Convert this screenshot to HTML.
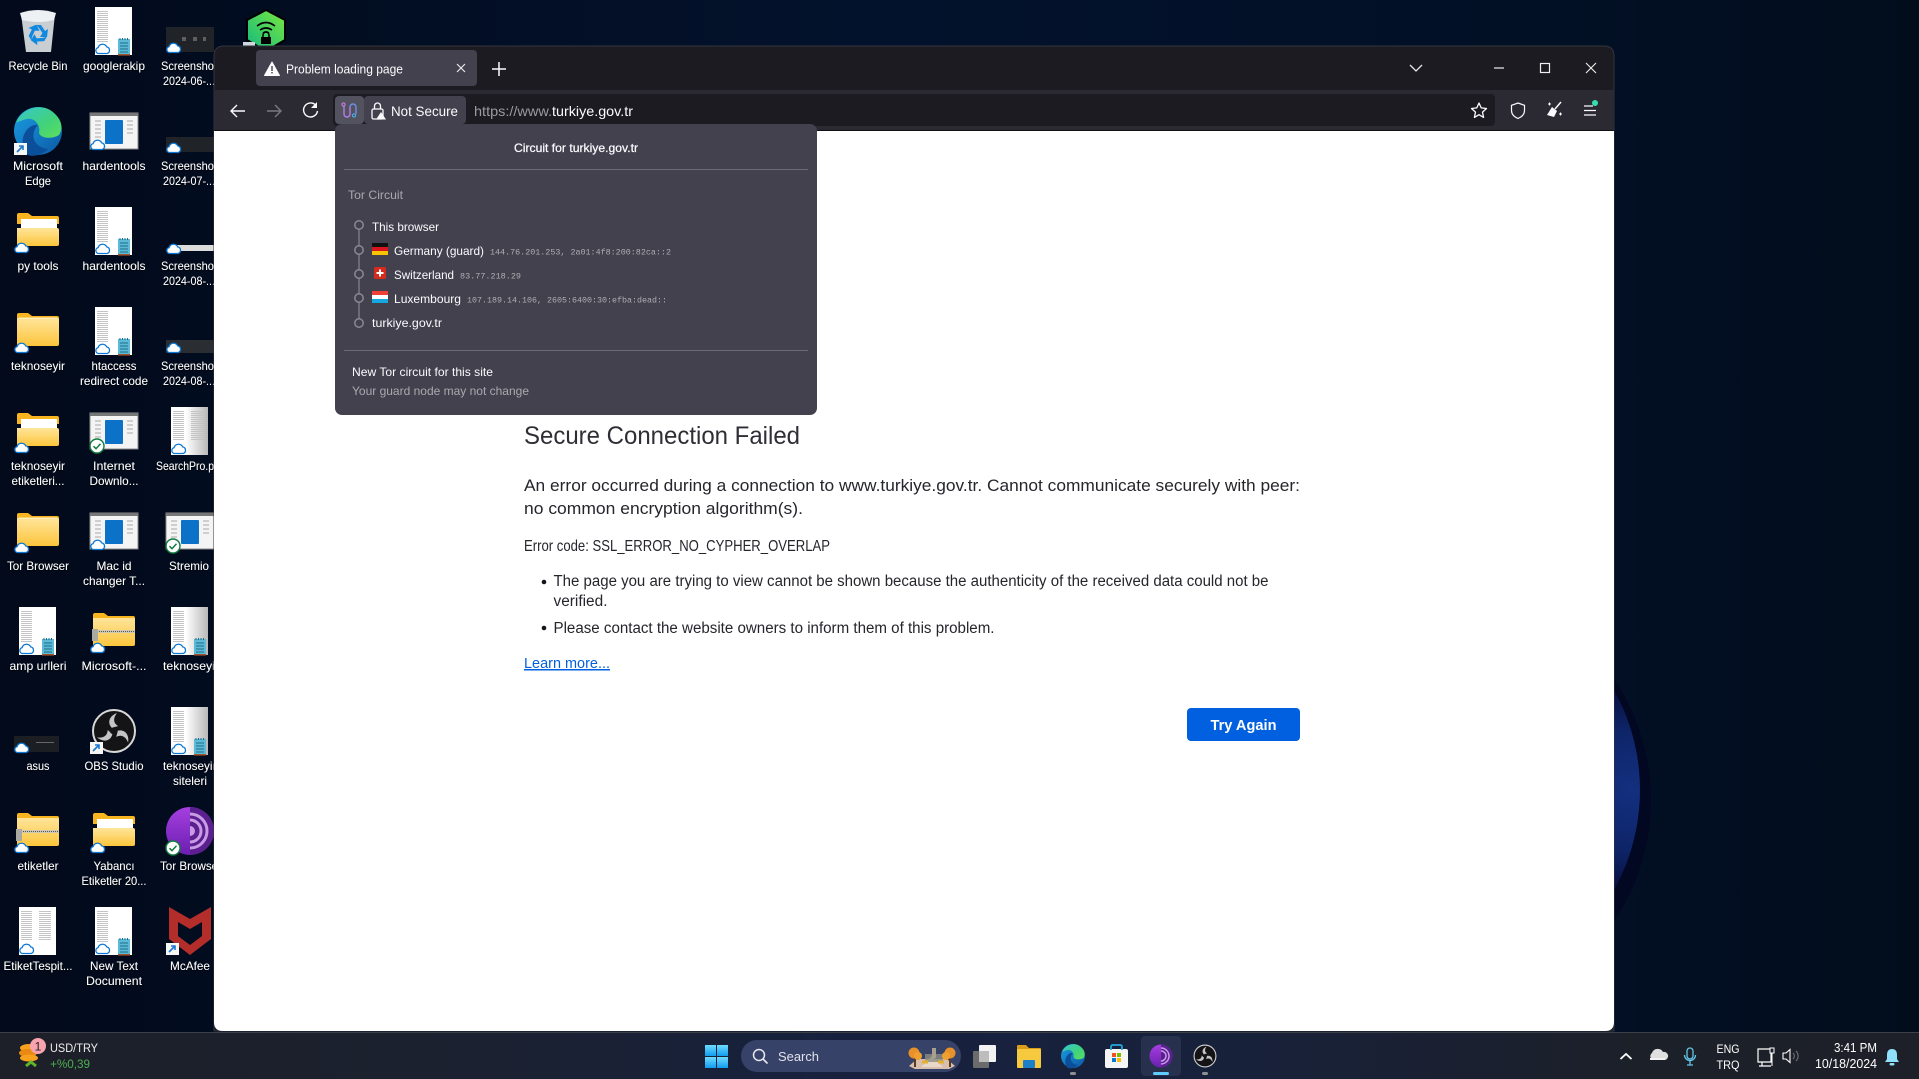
<!DOCTYPE html>
<html><head><meta charset="utf-8"><title>Problem loading page</title>
<style>
html,body{margin:0;padding:0;width:1919px;height:1079px;overflow:hidden;background:#020c1e}
svg{display:block;position:absolute;left:0;top:0}
text{font-family:"Liberation Sans",sans-serif}
.l{font-size:12px;fill:#fff;text-anchor:middle}
.m{font-family:"Liberation Mono",monospace;font-size:8.5px;fill:#aeaeb5}
.p{font-size:16px;fill:#26252c}
</style></head><body>
<svg width="1919" height="1079" viewBox="0 0 1919 1079" xmlns="http://www.w3.org/2000/svg">
<defs>
<linearGradient id="bg" x1="0" y1="0" x2="1" y2="0"><stop offset="0" stop-color="#020a1b"/><stop offset=".45" stop-color="#03122c"/><stop offset=".8" stop-color="#021026"/><stop offset="1" stop-color="#020d1c"/></linearGradient>
<radialGradient id="sph" gradientUnits="userSpaceOnUse" cx="1630" cy="790" r="100"><stop offset="0" stop-color="#13307f"/><stop offset=".6" stop-color="#0e2468"/><stop offset="1" stop-color="#061040"/></radialGradient>
<linearGradient id="tb" x1="0" y1="0" x2="1" y2="0"><stop offset="0" stop-color="#1d2028"/><stop offset=".25" stop-color="#1b2130"/><stop offset=".45" stop-color="#17213f"/><stop offset=".65" stop-color="#18213a"/><stop offset=".85" stop-color="#1c2029"/><stop offset="1" stop-color="#1d2028"/></linearGradient>
<linearGradient id="fold" x1="0" y1="0" x2="0" y2="1"><stop offset="0" stop-color="#ffe59a"/><stop offset="1" stop-color="#fcc53c"/></linearGradient>
<linearGradient id="edge" x1="0" y1="0" x2="1" y2="1"><stop offset="0" stop-color="#37c6d0"/><stop offset=".6" stop-color="#41d27a"/><stop offset="1" stop-color="#5fe05c"/></linearGradient>
<linearGradient id="edge2" x1="0" y1="0" x2="1" y2="1"><stop offset="0" stop-color="#1b9de2"/><stop offset="1" stop-color="#0c59a4"/></linearGradient>
<linearGradient id="tor" x1="0" y1="0" x2="0" y2="1"><stop offset="0" stop-color="#a63fe0"/><stop offset="1" stop-color="#6a1fb0"/></linearGradient>
<linearGradient id="win" x1="0" y1="0" x2="0" y2="1"><stop offset="0" stop-color="#6fdcff"/><stop offset="1" stop-color="#0f9cf0"/></linearGradient>
<linearGradient id="vpn" x1="0" y1="1" x2="1" y2="0"><stop offset="0" stop-color="#10b981"/><stop offset="1" stop-color="#7be83d"/></linearGradient>
<linearGradient id="fade" x1="0" y1="0" x2="1" y2="0"><stop offset=".4" stop-color="#fff"/><stop offset="1" stop-color="#b8b8b8"/></linearGradient>
<pattern id="txt" width="20" height="2" patternUnits="userSpaceOnUse"><rect width="13" height="1" fill="#c4c4c4"/></pattern>
<filter id="sh" x="-10%" y="-10%" width="120%" height="120%"><feDropShadow dx="0" dy="1" stdDeviation=".8" flood-color="#000" flood-opacity=".9"/></filter>

<g id="cloud"><path d="M3.6 10.5a3 3 0 0 1-.5-5.9 4.6 4.6 0 0 1 8.6-.7 3.400 3.400 0 0 1 .4 6.600z" fill="#fff" stroke="#0a78d4" stroke-width="1.300"/></g>
<g id="note"><rect x="0" y="1" width="12" height="16" fill="#5dbad6"/><path d="M2 5h8M2 8h8M2 11h8M2 14h8" stroke="#1c6f8a" stroke-width="1"/><rect y="16" width="12" height="1.600" fill="#a0522d"/><path d="M2 0v2M4.500 0v2M7 0v2M9.500 0v2" stroke="#1c6f8a"/></g>
<g id="doc"><rect width="37" height="48" fill="#fff"/><rect x="2" y="3" width="13" height="32" fill="url(#txt)"/><use href="#cloud" x="0" y="36"/><use href="#note" x="23" y="31"/></g>
<g id="docN"><rect width="37" height="48" fill="#fff"/><rect x="2" y="3" width="30" height="30" fill="url(#txt)"/><use href="#cloud" x="0" y="36"/></g>
<g id="docF"><rect width="37" height="48" fill="url(#fade)"/><rect x="2" y="3" width="13" height="32" fill="url(#txt)"/><use href="#cloud" x="0" y="36"/><use href="#note" x="23" y="31"/></g>
<g id="docW"><rect width="37" height="48" fill="url(#fade)"/><rect x="2" y="3" width="30" height="30" fill="url(#txt)"/><use href="#cloud" x="0" y="36"/></g>
<g id="fld"><path d="M0 2q0-2 2-2h9l4 3h25q2 0 2 2v6H0z" fill="#f8b520"/><path d="M0 5h40q2 0 2 2v24q0 2-2 2H2q-2 0-2-2z" fill="url(#fold)"/><path d="M2 5h38" stroke="#fff" stroke-width="1" opacity=".7"/><use href="#cloud" x="-3" y="29"/></g>
<g id="fldW"><path d="M0 2q0-2 2-2h9l4 3h25q2 0 2 2v6H0z" fill="#f8b520"/><rect x="4" y="6" width="36" height="12" fill="#fff"/><path d="M0 15h40q2 0 2 2v14q0 2-2 2H2q-2 0-2-2z" fill="url(#fold)"/><use href="#cloud" x="-3" y="29"/></g>
<g id="zip"><path d="M0 2q0-2 2-2h9l4 3h25q2 0 2 2v6H0z" fill="#f8b520"/><path d="M0 5h40q2 0 2 2v24q0 2-2 2H2q-2 0-2-2z" fill="url(#fold)"/><rect y="17" width="42" height="3" fill="#cfc9b4"/><path d="M2 18.500h40" stroke="#555" stroke-dasharray="1 1"/><rect x="-1" y="16" width="6" height="12" fill="#a9a9a2"/><use href="#cloud" x="-3" y="29"/></g>
<g id="app"><rect width="48" height="36" fill="#f4f4f4" stroke="#8a8a8a"/><rect width="48" height="3" fill="#777"/><rect x="15" y="7" width="18" height="24" rx="1" fill="#0b72c8"/><path d="M5 8h6M5 12h6M5 16h6M5 20h6M5 24h6M37 8h6M37 12h6M37 16h6M37 20h6" stroke="#aaa"/></g>
<g id="chk"><circle cx="7" cy="7" r="7" fill="#fff" stroke="#0f7b3e" stroke-width="1.400"/><path d="M3.500 7.200l2.500 2.500 4.500-5" fill="none" stroke="#0f7b3e" stroke-width="1.500"/></g>
<g id="short"><rect width="13" height="12" fill="#f6f6f6"/><path d="M3 9l6-6M5 3h4v4" stroke="#1e78d2" stroke-width="1.600" fill="none"/></g>
<path id="blade" d="M-2-3C-7-8-5-15 3-18-1-13-1-8 4-5 2-4-1-4-2-3z" fill="#c4c4c4"/>
<g id="obsi"><circle r="21" fill="#141416" stroke="#d8d8d8" stroke-width="2"/><use href="#blade"/><use href="#blade" transform="rotate(120)"/><use href="#blade" transform="rotate(240)"/></g>
<g id="arr"><path d="M-2-9L3-9 7-3 10-5 9 3 2 3 4.500-1 1-6z" fill="#0f88e0"/></g>
</defs>

<!-- wallpaper -->
<rect width="1919" height="1079" fill="url(#bg)"/>
<circle cx="1435" cy="800" r="216" fill="#020722"/>
<circle cx="1435" cy="790" r="205" fill="url(#sph)"/>

<!-- desktop icons -->
<g id="icons">
<!-- recycle -->
<g transform="translate(20,9)"><path d="M1 5h34l-4 38H6z" fill="#c9ced2"/><path d="M0 4q18-6 36 0l-2 7q-16 4-32 0z" fill="#eef1f3"/><g transform="translate(18,25)"><use href="#arr"/><use href="#arr" transform="rotate(120)"/><use href="#arr" transform="rotate(240)"/></g></g>
<use href="#doc" x="95" y="7"/>
<g><rect x="166" y="27" width="48" height="25" fill="#202327"/><rect x="182" y="37" width="4" height="4" fill="#5f5f5f"/><rect x="193" y="37" width="4" height="4" fill="#5f5f5f"/><rect x="203" y="37" width="3" height="4" fill="#5f5f5f"/><use href="#cloud" x="166" y="42"/></g>
<!-- edge -->
<g transform="translate(38,131)"><circle r="24" fill="url(#edge2)"/><path d="M-22-8C-16-24 6-30 18-16c6 6 7 14 3 20-6 4-18 4-20-2 2-8-5-16-12-14-5 1-9 3-12 4z" fill="url(#edge)"/><path d="M-10 24C-22 12-12-8 0-6-8 2-6 16 10 18c-6 6-14 8-20 6z" fill="#0b4f9a"/></g>
<use href="#short" x="14" y="143"/>
<g transform="translate(90,113)"><use href="#app"/><use href="#cloud" x="0" y="26"/></g>
<g><rect x="166" y="137" width="48" height="15" fill="#202327"/><use href="#cloud" x="166" y="142"/></g>
<g transform="translate(17,213)"><use href="#fldW"/></g>
<use href="#doc" x="95" y="207"/>
<g><rect x="176" y="245" width="38" height="6" fill="#dcdcdc"/><use href="#cloud" x="166" y="243"/></g>
<g transform="translate(17,313)"><use href="#fld"/></g>
<use href="#doc" x="95" y="307"/>
<g><rect x="166" y="340" width="48" height="13" fill="#2a2d31"/><use href="#cloud" x="166" y="342"/></g>
<g transform="translate(17,413)"><use href="#fldW"/></g>
<g transform="translate(90,413)"><use href="#app"/><use href="#chk" y="26"/></g>
<use href="#docW" x="171" y="407"/>
<g transform="translate(17,513)"><use href="#fld"/></g>
<g transform="translate(90,513)"><use href="#app"/><use href="#cloud" x="0" y="26"/></g>
<g transform="translate(166,513)"><use href="#app"/><use href="#chk" y="26"/></g>
<use href="#doc" x="19" y="607"/>
<g transform="translate(93,613)"><use href="#zip"/></g>
<use href="#docF" x="171" y="607"/>
<g><rect x="14" y="736" width="45" height="16" fill="#1b1e23"/><rect x="36" y="742" width="18" height="1" fill="#666"/><use href="#cloud" x="14" y="742"/></g>
<use href="#obsi" x="114" y="731"/>
<use href="#short" x="90" y="742"/>
<use href="#docF" x="171" y="707"/>
<g transform="translate(17,813)"><use href="#zip"/></g>
<g transform="translate(93,813)"><use href="#fldW"/></g>
<g transform="translate(190,831)"><circle r="24" fill="url(#tor)"/><path d="M0-24a24 24 0 0 1 0 48z" fill="#5b1f90"/><path d="M0-17a17 17 0 0 1 0 34M0-11a11 11 0 0 1 0 22" fill="none" stroke="#c79be6" stroke-width="3"/><path d="M0-5a5 5 0 0 1 0 10z" fill="#c79be6"/></g>
<use href="#chk" x="166" y="841"/>
<use href="#docN" x="19" y="907"/>
<use href="#doc" x="95" y="907"/>
<path d="M169 907l21 12 21-12v32l-21 16-21-16z" fill="#b32e2b"/><path d="M178 922l12 7 12-7v14l-12 9-12-9z" fill="#020d20"/>
<use href="#short" x="166" y="943"/>

<g filter="url(#sh)">
<text class="l" x="38" y="70" textLength="59" lengthAdjust="spacingAndGlyphs">Recycle Bin</text>
<text class="l" x="38" y="170" textLength="50" lengthAdjust="spacingAndGlyphs">Microsoft</text>
<text class="l" x="38" y="185" textLength="26" lengthAdjust="spacingAndGlyphs">Edge</text>
<text class="l" x="38" y="270" textLength="41" lengthAdjust="spacingAndGlyphs">py tools</text>
<text class="l" x="38" y="370" textLength="54" lengthAdjust="spacingAndGlyphs">teknoseyir</text>
<text class="l" x="38" y="470" textLength="54" lengthAdjust="spacingAndGlyphs">teknoseyir</text>
<text class="l" x="38" y="485" textLength="53" lengthAdjust="spacingAndGlyphs">etiketleri...</text>
<text class="l" x="38" y="570" textLength="62" lengthAdjust="spacingAndGlyphs">Tor Browser</text>
<text class="l" x="38" y="670" textLength="57" lengthAdjust="spacingAndGlyphs">amp urlleri</text>
<text class="l" x="38" y="770" textLength="23" lengthAdjust="spacingAndGlyphs">asus</text>
<text class="l" x="38" y="870" textLength="41" lengthAdjust="spacingAndGlyphs">etiketler</text>
<text class="l" x="38" y="970" textLength="69" lengthAdjust="spacingAndGlyphs">EtiketTespit...</text>

<text class="l" x="114" y="70" textLength="62" lengthAdjust="spacingAndGlyphs">googlerakip</text>
<text class="l" x="114" y="170" textLength="63" lengthAdjust="spacingAndGlyphs">hardentools</text>
<text class="l" x="114" y="270" textLength="63" lengthAdjust="spacingAndGlyphs">hardentools</text>
<text class="l" x="114" y="370" textLength="45" lengthAdjust="spacingAndGlyphs">htaccess</text>
<text class="l" x="114" y="385" textLength="68" lengthAdjust="spacingAndGlyphs">redirect code</text>
<text class="l" x="114" y="470" textLength="42" lengthAdjust="spacingAndGlyphs">Internet</text>
<text class="l" x="114" y="485" textLength="49" lengthAdjust="spacingAndGlyphs">Downlo...</text>
<text class="l" x="114" y="570" textLength="35" lengthAdjust="spacingAndGlyphs">Mac id</text>
<text class="l" x="114" y="585" textLength="62" lengthAdjust="spacingAndGlyphs">changer T...</text>
<text class="l" x="114" y="670" textLength="65" lengthAdjust="spacingAndGlyphs">Microsoft-...</text>
<text class="l" x="114" y="770" textLength="59" lengthAdjust="spacingAndGlyphs">OBS Studio</text>
<text class="l" x="114" y="870" textLength="41" lengthAdjust="spacingAndGlyphs">Yabancı</text>
<text class="l" x="114" y="885" textLength="65" lengthAdjust="spacingAndGlyphs">Etiketler 20...</text>
<text class="l" x="114" y="970" textLength="48" lengthAdjust="spacingAndGlyphs">New Text</text>
<text class="l" x="114" y="985" textLength="56" lengthAdjust="spacingAndGlyphs">Document</text>

<text class="l" x="189" y="70" textLength="56" lengthAdjust="spacingAndGlyphs">Screenshot</text>
<text class="l" x="189" y="85" textLength="52" lengthAdjust="spacingAndGlyphs">2024-06-...</text>
<text class="l" x="189" y="170" textLength="56" lengthAdjust="spacingAndGlyphs">Screenshot</text>
<text class="l" x="189" y="185" textLength="52" lengthAdjust="spacingAndGlyphs">2024-07-...</text>
<text class="l" x="189" y="270" textLength="56" lengthAdjust="spacingAndGlyphs">Screenshot</text>
<text class="l" x="189" y="285" textLength="52" lengthAdjust="spacingAndGlyphs">2024-08-...</text>
<text class="l" x="189" y="370" textLength="56" lengthAdjust="spacingAndGlyphs">Screenshot</text>
<text class="l" x="189" y="385" textLength="52" lengthAdjust="spacingAndGlyphs">2024-08-...</text>
<text class="l" x="185" y="470" textLength="58" lengthAdjust="spacingAndGlyphs">SearchPro.p</text>
<text class="l" x="189" y="570" textLength="40" lengthAdjust="spacingAndGlyphs">Stremio</text>
<text class="l" x="191" y="670" textLength="56" lengthAdjust="spacingAndGlyphs">teknoseyir</text>
<text class="l" x="191" y="770" textLength="56" lengthAdjust="spacingAndGlyphs">teknoseyiri</text>
<text class="l" x="190" y="785" textLength="34" lengthAdjust="spacingAndGlyphs">siteleri</text>
<text class="l" x="191" y="870" textLength="62" lengthAdjust="spacingAndGlyphs">Tor Browser</text>
<text class="l" x="190" y="970" textLength="40" lengthAdjust="spacingAndGlyphs">McAfee</text>
</g>
</g>

<!-- vpn icon -->
<path d="M266 10l19 10v20l-19 11-19-11V20z" fill="url(#vpn)" stroke="#000" stroke-width="2"/>
<path d="M257 26q9-7 18 0M260 30q6-4 12 0M263 33q3-2 6 0" fill="none" stroke="#000" stroke-width="1.600"/>
<rect x="261" y="37" width="10" height="7" fill="#000"/><path d="M263 37v-2a3 3 0 0 1 6 0v2" fill="none" stroke="#000" stroke-width="1.500"/>
<rect x="243" y="42" width="12" height="6" fill="#cfd6de"/>

<!-- browser window -->
<path d="M214 56q0-10 10-10h1380q10 0 10 10v975H214z" fill="#1c1b22" stroke="#34343c" stroke-width="1"/>
<rect x="214" y="90" width="1400" height="40" fill="#2b2a33"/>
<rect x="214" y="130" width="1400" height="1" fill="#111"/>
<path d="M214 131h1400v891q0 9-9 9H223q-9 0-9-9z" fill="#fff"/>

<!-- tab -->
<rect x="256" y="50" width="221" height="36" rx="4" fill="#42414d"/>
<path d="M272 62l7.500 13.500h-15z" fill="#fbfbfe" stroke="#fbfbfe" stroke-width="1" stroke-linejoin="round"/><rect x="271.300" y="66" width="1.400" height="5" fill="#42414d"/><rect x="271.300" y="72" width="1.400" height="1.500" fill="#42414d"/>
<text x="286" y="73.500" font-size="13" fill="#fbfbfe" textLength="117" lengthAdjust="spacingAndGlyphs">Problem loading page</text>
<path d="M457 64l8 8M465 64l-8 8" stroke="#e8e8ea" stroke-width="1.200"/>
<path d="M499 62v14M492 69h14" stroke="#fbfbfe" stroke-width="1.500"/>
<!-- window ctrls -->
<path d="M1410 65l6 6 6-6" fill="none" stroke="#e6e6e8" stroke-width="1.300"/>
<path d="M1494 68h10" stroke="#f0f0f0" stroke-width="1.200"/>
<rect x="1540.500" y="63.500" width="9" height="9" fill="none" stroke="#f0f0f0" stroke-width="1.200"/>
<path d="M1586 63l10 10M1596 63l-10 10" stroke="#f0f0f0" stroke-width="1.100"/>

<!-- toolbar -->
<path d="M245 111h-14M237 105l-6 6 6 6" fill="none" stroke="#fbfbfe" stroke-width="1.400"/>
<path d="M267 111h14M275 105l6 6-6 6" fill="none" stroke="#7a7980" stroke-width="1.400"/>
<path d="M315.500 105a7 7 0 1 0 2 6" fill="none" stroke="#fbfbfe" stroke-width="1.400"/><path d="M317 102v6h-6z" fill="#fbfbfe"/>
<rect x="333" y="94" width="1162" height="32" rx="4" fill="#1c1b22"/>
<rect x="335" y="96" width="29" height="28" rx="4" fill="#53525f"/>
<rect x="364" y="96" width="102" height="28" rx="4" fill="#42414d"/>
<path d="M344 106v8a3 3 0 0 0 6 0v-7" fill="none" stroke="#b57ce8" stroke-width="1.400"/><path d="M350 107a3 3 0 0 1 6 0v7" fill="none" stroke="#6f8fe8" stroke-width="1.400"/>
<circle cx="343.500" cy="104.500" r="1.600" fill="none" stroke="#c77ee8" stroke-width="1.100"/><circle cx="354" cy="115.500" r="1.600" fill="none" stroke="#4ab0e8" stroke-width="1.100"/>
<rect x="372" y="109" width="11" height="10" rx="1.500" fill="none" stroke="#fbfbfe" stroke-width="1.300"/><path d="M374.500 109v-3a3 3 0 0 1 6 0v3" fill="none" stroke="#fbfbfe" stroke-width="1.300"/><path d="M381 112l5 7.500h-10z" fill="#fbfbfe"/>
<text x="391" y="116" font-size="14" fill="#fbfbfe" textLength="67" lengthAdjust="spacingAndGlyphs">Not Secure</text>
<text x="474" y="116" font-size="14" fill="#9a9aa0" textLength="78" lengthAdjust="spacingAndGlyphs">https://www.</text>
<text x="552" y="116" font-size="14" fill="#fbfbfe" textLength="81" lengthAdjust="spacingAndGlyphs">turkiye.gov.tr</text>
<path d="M1479 103l2.200 4.900 5.300.6-4 3.600 1.100 5.300-4.600-2.700-4.600 2.700 1.100-5.300-4-3.600 5.300-.6z" fill="none" stroke="#fbfbfe" stroke-width="1.300" stroke-linejoin="round"/>
<path d="M1518 103l6.500 2.300v5.200c0 4-3 6.500-6.500 8-3.500-1.500-6.500-4-6.500-8v-5.200z" fill="none" stroke="#fbfbfe" stroke-width="1.200"/>
<path d="M1561 102l-6 7" stroke="#fbfbfe" stroke-width="1.500"/><path d="M1552 107l5 4-3 6-7-2z" fill="#fbfbfe"/><path d="M1548 104h3M1549.500 102.500v3M1559 114h3M1560.500 112.500v3" stroke="#fbfbfe"/>
<path d="M1584 106h9M1584 110.500h12M1584 115h12" stroke="#fbfbfe" stroke-width="1.200"/><circle cx="1595" cy="103" r="3" fill="#35e0ac"/>

<!-- page -->
<text x="524" y="444" font-size="25" fill="#2f2e35" textLength="276" lengthAdjust="spacingAndGlyphs">Secure Connection Failed</text>
<text class="p" x="524" y="491" style="font-size:17px" textLength="776" lengthAdjust="spacingAndGlyphs">An error occurred during a connection to www.turkiye.gov.tr. Cannot communicate securely with peer:</text>
<text class="p" x="524" y="514" style="font-size:17px" textLength="279" lengthAdjust="spacingAndGlyphs">no common encryption algorithm(s).</text>
<text class="p" x="524" y="551" style="font-size:16px" textLength="306" lengthAdjust="spacingAndGlyphs">Error code: SSL_ERROR_NO_CYPHER_OVERLAP</text>
<circle cx="544" cy="582" r="2.300" fill="#15141a"/>
<text class="p" x="553.500" y="586" style="font-size:15.500px" textLength="715" lengthAdjust="spacingAndGlyphs">The page you are trying to view cannot be shown because the authenticity of the received data could not be</text>
<text class="p" x="553.500" y="606" style="font-size:15.500px" textLength="54" lengthAdjust="spacingAndGlyphs">verified.</text>
<circle cx="544" cy="628" r="2.300" fill="#15141a"/>
<text class="p" x="553.500" y="633" style="font-size:15.500px" textLength="441" lengthAdjust="spacingAndGlyphs">Please contact the website owners to inform them of this problem.</text>
<text x="524" y="668" font-size="15" fill="#0060df" text-decoration="underline" textLength="86" lengthAdjust="spacingAndGlyphs">Learn more...</text>
<rect x="1187" y="708" width="113" height="33" rx="4" fill="#0060df"/>
<text x="1243.500" y="730" font-size="15" font-weight="bold" fill="#fff" text-anchor="middle" textLength="66" lengthAdjust="spacingAndGlyphs">Try Again</text>

<!-- popup -->
<rect x="335" y="124" width="482" height="291" rx="7" fill="#42414d"/>
<text x="576" y="152" font-size="12" fill="#fbfbfe" stroke="#fbfbfe" stroke-width=".25" text-anchor="middle" textLength="124" lengthAdjust="spacingAndGlyphs">Circuit for turkiye.gov.tr</text>
<path d="M344 169.500h464M344 350.500h464" stroke="#6b6a75"/>
<text x="348" y="199" font-size="12" fill="#a9a9b0" textLength="55" lengthAdjust="spacingAndGlyphs">Tor Circuit</text>
<path d="M359 226v97" stroke="#7a7984" stroke-width="1.500"/>
<g fill="#42414d" stroke="#8a8993" stroke-width="1.500"><circle cx="359" cy="225" r="4.200"/><circle cx="359" cy="250" r="4.200"/><circle cx="359" cy="274" r="4.200"/><circle cx="359" cy="298" r="4.200"/><circle cx="359" cy="323" r="4.200"/></g>
<text x="372" y="231" font-size="12" fill="#fbfbfe" textLength="67" lengthAdjust="spacingAndGlyphs">This browser</text>
<rect x="372" y="243" width="16" height="4" fill="#111"/><rect x="372" y="247" width="16" height="4" fill="#d8141c"/><rect x="372" y="251" width="16" height="4" fill="#f8c300"/>
<text x="394" y="255" font-size="12" fill="#fbfbfe" textLength="90" lengthAdjust="spacingAndGlyphs">Germany (guard)</text>
<text class="m" x="490" y="254.500" textLength="181" lengthAdjust="spacingAndGlyphs">144.76.201.253, 2a01:4f8:200:82ca::2</text>
<rect x="374" y="267" width="12" height="12" rx="1.500" fill="#d52b1e"/><path d="M380 269.500v7M376.500 273h7" stroke="#fff" stroke-width="2"/>
<text x="394" y="279" font-size="12" fill="#fbfbfe" textLength="60" lengthAdjust="spacingAndGlyphs">Switzerland</text>
<text class="m" x="460" y="278.500" textLength="61" lengthAdjust="spacingAndGlyphs">83.77.218.29</text>
<rect x="372" y="291" width="16" height="4" fill="#ef4135"/><rect x="372" y="295" width="16" height="4" fill="#fff"/><rect x="372" y="299" width="16" height="4" fill="#16a7de"/>
<text x="394" y="303" font-size="12" fill="#fbfbfe" textLength="67" lengthAdjust="spacingAndGlyphs">Luxembourg</text>
<text class="m" x="467" y="302.500" textLength="200" lengthAdjust="spacingAndGlyphs">107.189.14.106, 2605:6400:30:efba:dead::</text>
<text x="372" y="327" font-size="12" fill="#fbfbfe" textLength="70" lengthAdjust="spacingAndGlyphs">turkiye.gov.tr</text>
<text x="352" y="376" font-size="12" fill="#fbfbfe" textLength="141" lengthAdjust="spacingAndGlyphs">New Tor circuit for this site</text>
<text x="352" y="395" font-size="12" fill="#a9a9b0" textLength="177" lengthAdjust="spacingAndGlyphs">Your guard node may not change</text>

<!-- taskbar -->
<rect y="1032" width="1919" height="47" fill="url(#tb)"/>
<rect y="1032" width="1919" height="1" fill="#3c4049"/>
<g fill="#f7a11f"><ellipse cx="29" cy="1048" rx="9" ry="4"/><ellipse cx="28" cy="1053" rx="9" ry="4" fill="#e88a12"/><ellipse cx="29" cy="1058" rx="9" ry="3.500"/></g>
<path d="M26 1066l5-4 5 4" fill="none" stroke="#5fb52a" stroke-width="3"/>
<circle cx="38" cy="1046" r="8" fill="#f8a3ae"/>
<text x="38" y="1050.500" font-size="12" fill="#222" text-anchor="middle">1</text>
<text x="50" y="1052" font-size="12" fill="#eee" textLength="48" lengthAdjust="spacingAndGlyphs">USD/TRY</text>
<text x="50" y="1068" font-size="12" fill="#4caf50" textLength="40" lengthAdjust="spacingAndGlyphs">+%0,39</text>

<g fill="url(#win)"><rect x="705" y="1045" width="11" height="11"/><rect x="717" y="1045" width="11" height="11"/><rect x="705" y="1057" width="11" height="11"/><rect x="717" y="1057" width="11" height="11"/></g>
<rect x="741" y="1040" width="220" height="32" rx="16" fill="#374268"/>
<circle cx="759" cy="1055" r="5.500" fill="none" stroke="#e8e8ee" stroke-width="1.500"/><path d="M763 1059l4.500 4.500" stroke="#e8e8ee" stroke-width="1.600"/>
<text x="778" y="1061" font-size="13" fill="#dfe2ea" textLength="41" lengthAdjust="spacingAndGlyphs">Search</text>
<g><path d="M915 1069h34l6-3-8-7h-30l-8 7z" fill="#d8bfae"/><path d="M921 1067l11-11 11 11z" fill="#e8d8c8"/><rect x="925" y="1054" width="18" height="8" fill="#8d8d80" opacity=".8"/><rect x="932" y="1048" width="4" height="10" fill="#a8a08c"/><rect x="914" y="1055" width="2" height="12" fill="#5a3a20"/><rect x="949" y="1055" width="2" height="12" fill="#5a3a20"/><circle cx="914" cy="1053" r="5.500" fill="#e8902a"/><circle cx="918" cy="1056" r="4" fill="#f0a030"/><circle cx="950" cy="1053" r="5.500" fill="#e8902a"/><circle cx="946" cy="1056" r="4" fill="#f0a030"/><path d="M922 1062h6M938 1062h6" stroke="#e4b030" stroke-width="3"/></g>
<rect x="973" y="1051" width="16" height="17" rx="1" fill="#6b6b6b"/><rect x="979" y="1045" width="17" height="17" rx="1" fill="#f2f2f2"/><rect x="979" y="1051" width="10" height="11" fill="#bdbdbd"/>
<path d="M1017 1046q0-1 1-1h8l3 3h11q1 0 1 1v4h-24z" fill="#d99c1c"/><rect x="1017" y="1049" width="24" height="19" rx="1" fill="#f7c93f"/><rect x="1023" y="1060" width="12" height="8" rx="1" fill="#1c7fc9"/>
<g transform="translate(1073,1056) scale(.5)"><circle r="24" fill="url(#edge2)"/><path d="M-22-8C-16-24 6-30 18-16c6 6 7 14 3 20-6 4-18 4-20-2 2-8-5-16-12-14-5 1-9 3-12 4z" fill="url(#edge)"/><path d="M-10 24C-22 12-12-8 0-6-8 2-6 16 10 18c-6 6-14 8-20 6z" fill="#0b4f9a"/></g>
<rect x="1070" y="1072" width="6" height="3" rx="1.500" fill="#8e8e95"/>
<rect x="1105" y="1049" width="23" height="19" rx="2" fill="#f5f5f5"/><path d="M1111 1050v-3q0-2 2-2h7q2 0 2 2v3" fill="none" stroke="#22a6dd" stroke-width="1.800"/>
<rect x="1112" y="1053" width="4" height="4" fill="#f25022"/><rect x="1117" y="1053" width="4" height="4" fill="#7fba00"/><rect x="1112" y="1058" width="4" height="4" fill="#0a78d4"/><rect x="1117" y="1058" width="4" height="4" fill="#ffb900"/>
<rect x="1141" y="1036" width="40" height="40" rx="4" fill="#27304d"/>
<g transform="translate(1161,1056)"><circle r="11.500" fill="url(#tor)"/><path d="M0-11.500a11.500 11.500 0 0 1 0 23z" fill="#5b1f90"/><path d="M0-8a8 8 0 0 1 0 16M0-5a5 5 0 0 1 0 10" fill="none" stroke="#c79be6" stroke-width="1.500"/></g>
<rect x="1153" y="1072" width="16" height="3" rx="1.500" fill="#60cdff"/>
<g transform="translate(1205,1056) scale(.52)"><use href="#obsi"/></g>
<rect x="1202" y="1072" width="6" height="3" rx="1.500" fill="#8e8e95"/>

<path d="M1620.500 1059l5.500-5 5.500 5" fill="none" stroke="#fff" stroke-width="1.800"/>
<path d="M1653 1060a4 4 0 0 1-1-7 6 6 0 0 1 11-1 4 4 0 0 1 2 8z" fill="#dfdfdf"/><path d="M1650 1058h15v2h-15z" fill="#f2f2f2"/>
<rect x="1687" y="1048" width="6" height="11" rx="3" fill="none" stroke="#62c6e8" stroke-width="1.300"/><path d="M1684.500 1055a5.500 5.500 0 0 0 11 0M1690 1061v4M1687 1065h6" fill="none" stroke="#62c6e8" stroke-width="1.300"/>
<text x="1728" y="1053" font-size="12" fill="#fff" text-anchor="middle" textLength="23" lengthAdjust="spacingAndGlyphs">ENG</text>
<text x="1728" y="1069" font-size="12" fill="#fff" text-anchor="middle" textLength="23" lengthAdjust="spacingAndGlyphs">TRQ</text>
<path d="M1759 1049h12v13h-13v-13zM1762 1062v4M1759 1066h12" fill="none" stroke="#fff" stroke-width="1.200"/><rect x="1770" y="1048" width="4" height="5" fill="#1c2029" stroke="#fff"/><path d="M1772 1053v13" stroke="#fff"/>
<path d="M1783 1053h3l4-3.500v13l-4-3.500h-3z" fill="none" stroke="#fff" stroke-width="1.100"/><path d="M1793 1053a4 4 0 0 1 0 6M1796 1051a7 7 0 0 1 0 10" fill="none" stroke="#777" stroke-width="1"/>
<text x="1877" y="1052" font-size="12.500" fill="#fff" text-anchor="end" textLength="43" lengthAdjust="spacingAndGlyphs">3:41 PM</text>
<text x="1877" y="1068" font-size="12.500" fill="#fff" text-anchor="end" textLength="62" lengthAdjust="spacingAndGlyphs">10/18/2024</text>
<path d="M1892 1049q5 0 5 6v4l2 3h-14l2-3v-4q0-6 5-6z" fill="#8fe0fb"/><rect x="1889.500" y="1063" width="5" height="2.500" rx="1.200" fill="#8fe0fb"/>
</svg>
</body></html>
